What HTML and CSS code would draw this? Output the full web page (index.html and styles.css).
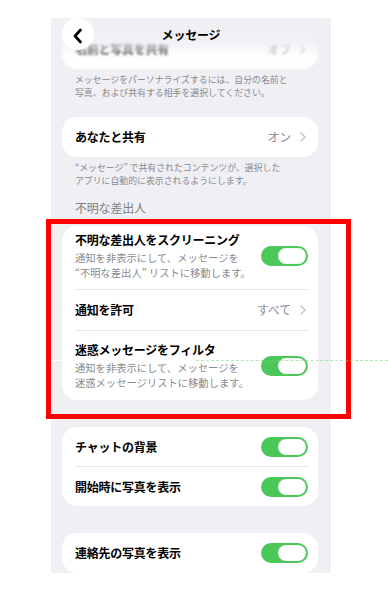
FILE: index.html
```html
<!DOCTYPE html>
<html lang="ja">
<head>
<meta charset="utf-8">
<title>メッセージ</title>
<link rel="stylesheet" href="styles.css">
</head>
<body>
<div class="phone">
  <div class="content">
    <div class="card card-under">
      <div class="row">
        <span class="label">名前と写真を共有</span>
        <span class="value">オフ<svg class="chev" viewBox="0 0 6 10" width="6" height="10"><path d="M1 1 L5 5 L1 9" fill="none" stroke="#c7c7cc" stroke-width="1.6" stroke-linecap="round" stroke-linejoin="round"/></svg></span>
      </div>
    </div>
    <p class="footer">メッセージをパーソナライズするには、自分の名前と<br>写真、および共有する相手を選択してください。</p>

    <div class="card card-gap">
      <div class="row">
        <span class="label">あなたと共有</span>
        <span class="value">オン<svg class="chev" viewBox="0 0 6 10" width="6" height="10"><path d="M1 1 L5 5 L1 9" fill="none" stroke="#c7c7cc" stroke-width="1.6" stroke-linecap="round" stroke-linejoin="round"/></svg></span>
      </div>
    </div>
    <p class="footer">“メッセージ” で共有されたコンテンツが、選択した<br>アプリに自動的に表示されるようにします。</p>

    <h3 class="section">不明な差出人</h3>
    <div class="card card-unknown">
      <div class="row row-sub row-first">
        <div class="texts">
          <span class="label">不明な差出人をスクリーニング</span>
          <span class="sub">通知を非表示にして、メッセージを<br>“不明な差出人” リストに移動します。</span>
        </div>
        <span class="toggle"><span class="knob"></span></span>
      </div>
      <div class="sep"></div>
      <div class="row">
        <span class="label">通知を許可</span>
        <span class="value">すべて<svg class="chev" viewBox="0 0 6 10" width="6" height="10"><path d="M1 1 L5 5 L1 9" fill="none" stroke="#c7c7cc" stroke-width="1.6" stroke-linecap="round" stroke-linejoin="round"/></svg></span>
      </div>
      <div class="sep"></div>
      <div class="row row-sub row-last">
        <div class="texts">
          <span class="label">迷惑メッセージをフィルタ</span>
          <span class="sub">通知を非表示にして、メッセージを<br>迷惑メッセージリストに移動します。</span>
        </div>
        <span class="toggle"><span class="knob"></span></span>
      </div>
    </div>

    <div class="card card-far">
      <div class="row row-tight">
        <span class="label">チャットの背景</span>
        <span class="toggle"><span class="knob"></span></span>
      </div>
      <div class="sep"></div>
      <div class="row row-tight">
        <span class="label">開始時に写真を表示</span>
        <span class="toggle"><span class="knob"></span></span>
      </div>
    </div>

    <div class="card card-far">
      <div class="row">
        <span class="label">連絡先の写真を表示</span>
        <span class="toggle"><span class="knob"></span></span>
      </div>
    </div>
  </div>

  <div class="nav">
    <span class="back"><svg viewBox="0 0 12 16" width="12" height="16"><path d="M8.5 2 L3 8 L8.5 14" fill="none" stroke="#000" stroke-width="2.6" stroke-linecap="round" stroke-linejoin="round"/></svg></span>
    <span class="nav-title">メッセージ</span>
  </div>
</div>
<div class="highlight"></div>
<div class="guide"></div>
<div class="guide-left"></div>
</body>
</html>
```

FILE: styles.css
```css
* { box-sizing: border-box; }

html, body {
  margin: 0;
  padding: 0;
  background: #ffffff;
}

body {
  width: 388px;
  height: 599px;
  position: relative;
  overflow: hidden;
  font-family: "Noto Sans CJK JP", "Noto Sans", sans-serif;
  color: #000;
}

.phone {
  position: relative;
  margin: 18px 0 0 51px;
  width: 280px;
  height: 555px;
  background: #efeff4;
  overflow: hidden;
}

.content {
  padding: 11px 13px 0 11px;
  display: flex;
  flex-direction: column;
}

.card {
  background: #ffffff;
  border-radius: 15px;
  display: flex;
  flex-direction: column;
  flex-shrink: 0;
}

.card-under {
  filter: blur(0.8px);
}
.card-under .label { color: #333; }

.card-gap { margin-top: 17px; }
.card-unknown { margin-top: 10px; }
.card-far { margin-top: 27px; }

.row {
  height: 40px;
  padding: 0 10px 0 13px;
  display: flex;
  align-items: center;
  justify-content: space-between;
}

.row-tight { height: 39px; }

.row-sub {
  height: auto;
  align-items: center;
}
.row-first { padding-top: 6px; padding-bottom: 9px; }
.row-last { padding-top: 11px; padding-bottom: 10px; }

.texts {
  display: flex;
  flex-direction: column;
}

.label {
  font-size: 12px;
  line-height: 17.5px;
  margin: -0.75px 0;
  font-weight: 700;
  letter-spacing: -0.25px;
  white-space: nowrap;
}

.sub {
  margin-top: 2px;
  font-size: 10.3px;
  line-height: 15px;
  color: #8a8a8e;
  white-space: nowrap;
}

.value {
  display: flex;
  align-items: center;
  gap: 9px;
  padding-right: 2px;
  font-size: 12px;
  line-height: 17.5px;
  color: #8e8e93;
  letter-spacing: -0.2px;
}

.chev { display: block; }

.sep {
  height: 1px;
  background: #e6e6eb;
  margin: 0 10px 0 13px;
}

.footer {
  margin: 5px 0 0 0;
  padding-left: 13px;
  font-size: 8.9px;
  line-height: 12.9px;
  color: #8a8a8e;
  white-space: nowrap;
}

.section {
  margin: 11px 0 0 0;
  padding-left: 13px;
  font-size: 12px;
  line-height: 17.5px;
  font-weight: 400;
  color: #7e7e83;
  letter-spacing: -0.2px;
}

.toggle {
  width: 47px;
  height: 20px;
  border-radius: 10px;
  background: #4cc75a;
  display: flex;
  align-items: center;
  justify-content: flex-end;
  padding-right: 2px;
  flex-shrink: 0;
}

.knob {
  width: 28px;
  height: 16px;
  border-radius: 8px;
  background: #ffffff;
  box-shadow: inset 0 0 0 0.5px rgba(0,0,0,0.06);
}

.nav {
  position: absolute;
  left: 0;
  top: 0;
  width: 100%;
  height: 40px;
  background: linear-gradient(to bottom, rgba(239,239,244,1) 0%, rgba(239,239,244,0.9) 55%, rgba(239,239,244,0) 100%);
  display: flex;
  align-items: center;
  justify-content: center;
}

.back {
  position: absolute;
  left: 11px;
  top: 0;
  width: 32px;
  height: 32px;
  border-radius: 50%;
  background: #ffffff;
  display: flex;
  align-items: center;
  justify-content: center;
  padding-top: 3px;
}
.back svg { display: block; }

.nav-title {
  margin-top: -7px;
  font-size: 12px;
  font-weight: 700;
  line-height: 17.5px;
  letter-spacing: -0.2px;
}

.highlight {
  position: absolute;
  left: 46px;
  top: 219px;
  width: 305px;
  height: 200px;
  border: 5px solid #ff0000;
}

.guide {
  position: absolute;
  left: 196px;
  right: 0;
  top: 360px;
  height: 0;
  border-top: 1px dashed rgba(120, 205, 120, 0.55);
}

.guide-left {
  position: absolute;
  left: 51px;
  width: 11px;
  top: 360px;
  height: 1px;
  background: rgba(255,255,255,0.9);
}
```
